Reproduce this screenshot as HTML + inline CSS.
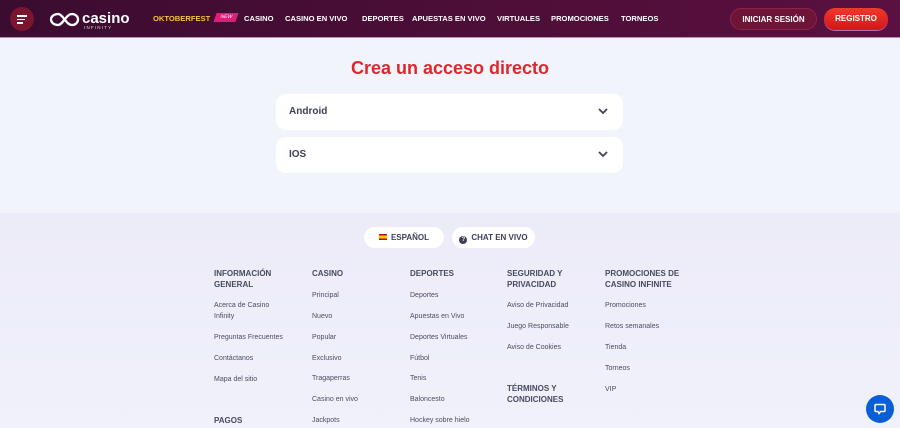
<!DOCTYPE html>
<html><head><meta charset="utf-8"><style>
*{margin:0;padding:0;box-sizing:border-box}
body{width:900px;height:428px;overflow:hidden;background:#f1f5fb;font-family:"Liberation Sans","DejaVu Sans",sans-serif;position:relative}
.hdr{position:absolute;left:0;top:0;width:900px;height:38px;background:linear-gradient(90deg,#3b0c30,#4f0e38 60%,#5a1040);border-bottom:1px solid #b48fc0}
.menu{position:absolute;left:10px;top:7px;width:24px;height:24px;border-radius:50%;background:#7a1530}
.menu i{position:absolute;left:7px;height:1.5px;background:#fff}
.nav{position:absolute;top:14px;font-size:7.6px;font-weight:bold;color:#fff;white-space:nowrap}
.btn{position:absolute;top:8px;height:22px;border-radius:11px;font-size:8px;font-weight:bold;color:#fff;text-align:center;line-height:22px}
h1{position:absolute;top:58px;width:900px;text-align:center;font-size:18px;color:#e0262c;font-weight:bold}
.acc{position:absolute;left:276px;width:347px;height:36px;background:#fff;border-radius:10px;font-size:10px;font-weight:bold;color:#3d4057;padding-left:13px;line-height:36px}
.acc svg{position:absolute;right:15px;top:14px}
.foot{position:absolute;left:0;top:213px;width:900px;height:215px;background:linear-gradient(180deg,#ecebf8,#f1f1fb)}
.pill{position:absolute;top:227px;height:21px;border-radius:11px;background:#fff;font-size:8px;font-weight:bold;color:#3d3f58;line-height:21px;text-align:center}
.col{position:absolute;font-size:7px;color:#4a4c62}
.col b{display:block;font-size:8px;color:#484a60;line-height:10.5px;font-weight:bold}
.col span{position:absolute;left:0;white-space:nowrap;line-height:11px}
.chat{position:absolute;left:866px;top:395px;width:28px;height:28px;border-radius:50%;background:#0b5fd6}
</style></head><body>
<div class="hdr">
<div class="menu"><i style="top:8px;width:10px"></i><i style="top:11.5px;width:8px"></i><i style="top:15px;width:6px"></i></div>
<svg style="position:absolute;left:48px;top:10px" width="92" height="20" viewBox="0 0 92 20"><path d="M10 4c-4 0-7 2.5-7 5.5S6 15 10 15c5 0 8-11 14-11 3.5 0 6 2.5 6 5.5S27.5 15 24 15c-6 0-9-11-14-11z" fill="none" stroke="#fff" stroke-width="2.3"/><text x="34" y="13" font-family="Liberation Sans" font-size="15" font-weight="bold" fill="#fff">casino</text><text x="36" y="19" font-family="Liberation Sans" font-size="4.5" fill="#ddd" letter-spacing="1.2">INFINITY</text></svg>
<div class="nav" style="left:153px;color:#f5c33b">OKTOBERFEST</div>
<div style="position:absolute;left:215px;top:13px;width:22px;height:9px;background:#d9207a;transform:skewX(-20deg);font-size:5px;color:#fff;text-align:center;line-height:9px">NEW</div>
<div class="nav" style="left:244px">CASINO</div>
<div class="nav" style="left:285px">CASINO EN VIVO</div>
<div class="nav" style="left:362px">DEPORTES</div>
<div class="nav" style="left:412px">APUESTAS EN VIVO</div>
<div class="nav" style="left:497px">VIRTUALES</div>
<div class="nav" style="left:551px">PROMOCIONES</div>
<div class="nav" style="left:621px">TORNEOS</div>
<div class="btn" style="left:730px;width:87px;background:#6e1436;border:1px solid #8a2548">INICIAR SESIÓN</div>
<div class="btn" style="left:824px;width:64px;background:linear-gradient(#f03a2a,#d5141e);box-shadow:0 1px 0 #c06aa8">REGISTRO</div>
</div>
<h1>Crea un acceso directo</h1>
<div class="acc" style="top:94px">Android<svg width="10" height="7" viewBox="0 0 10 7"><path d="M1 1l4 4 4-4" fill="none" stroke="#3d4057" stroke-width="1.8"/></svg></div>
<div class="acc" style="top:137px">IOS<svg width="10" height="7" viewBox="0 0 10 7"><path d="M1 1l4 4 4-4" fill="none" stroke="#3d4057" stroke-width="1.8"/></svg></div>
<div class="foot"></div>
<div class="pill" style="left:364px;width:80px"><span style="display:inline-block;width:8px;height:6px;background:linear-gradient(#c60b1e 25%,#ffc400 25% 75%,#c60b1e 75%);margin-right:4px"></span>ESPAÑOL</div>
<div class="pill" style="left:452px;width:83px"><span style="display:inline-block;width:8px;height:8px;border-radius:50%;background:#3d3f58;color:#fff;font-size:6px;line-height:8px;vertical-align:-1px;margin-right:4px">?</span>CHAT EN VIVO</div>
<div class="col" style="left:214px;top:269px"><b>INFORMACIÓN<br>GENERAL</b><span style="top:31px">Acerca de Casino<br>Infinity</span><span style="top:63px">Preguntas Frecuentes</span><span style="top:84px">Contáctanos</span><span style="top:105px">Mapa del sitio</span><span style="top:146px;font-size:8px;font-weight:bold;color:#484a60">PAGOS</span></div>
<div class="col" style="left:312px;top:269px"><b>CASINO</b><span style="top:21px">Principal</span><span style="top:42px">Nuevo</span><span style="top:63px">Popular</span><span style="top:84px">Exclusivo</span><span style="top:104px">Tragaperras</span><span style="top:125px">Casino en vivo</span><span style="top:146px">Jackpots</span></div>
<div class="col" style="left:410px;top:269px"><b>DEPORTES</b><span style="top:21px">Deportes</span><span style="top:42px">Apuestas en Vivo</span><span style="top:63px">Deportes Virtuales</span><span style="top:84px">Fútbol</span><span style="top:104px">Tenis</span><span style="top:125px">Baloncesto</span><span style="top:146px">Hockey sobre hielo</span></div>
<div class="col" style="left:507px;top:269px"><b>SEGURIDAD Y<br>PRIVACIDAD</b><span style="top:31px">Aviso de Privacidad</span><span style="top:52px">Juego Responsable</span><span style="top:73px">Aviso de Cookies</span><span style="top:115px;font-size:8px;font-weight:bold;color:#484a60;line-height:10.5px">TÉRMINOS Y<br>CONDICIONES</span></div>
<div class="col" style="left:605px;top:269px"><b>PROMOCIONES DE<br>CASINO INFINITE</b><span style="top:31px">Promociones</span><span style="top:52px">Retos semanales</span><span style="top:73px">Tienda</span><span style="top:94px">Torneos</span><span style="top:115px">VIP</span></div>
<div class="chat"><svg style="position:absolute;left:8px;top:8px" width="12" height="12" viewBox="0 0 12 12"><path d="M2 1.5h8a1 1 0 0 1 1 1v5a1 1 0 0 1-1 1H6.5L5 10.5 4 8.5H2a1 1 0 0 1-1-1v-5a1 1 0 0 1 1-1z" fill="none" stroke="#fff" stroke-width="1.5"/></svg></div>
</body></html>
